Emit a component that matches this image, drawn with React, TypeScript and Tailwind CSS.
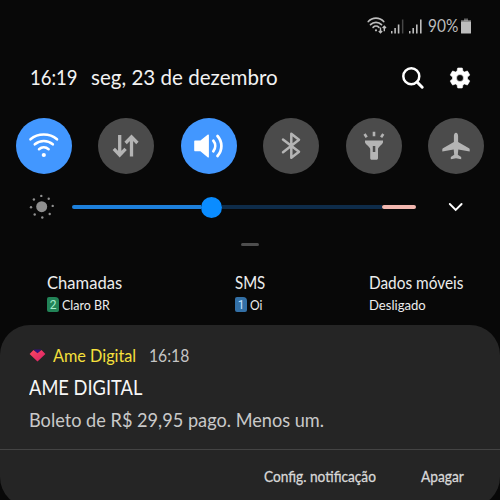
import { useLayoutEffect, useRef, type ReactNode } from "react";

/* Condenses a line of text so that it fills exactly the width of its box. */
function Fit({ className, children }: { className: string; children: string }) {
  const ref = useRef<HTMLSpanElement>(null);
  useLayoutEffect(() => {
    const fit = () => {
      const el = ref.current;
      if (!el || !el.parentElement) return;
      el.style.transform = `scaleX(${el.parentElement.offsetWidth / el.offsetWidth})`;
    };
    fit();
    document.fonts.ready.then(fit);
  }, []);
  return (
    <div className={`shrink-0 whitespace-nowrap ${className}`}>
      <span ref={ref} className="inline-block origin-left">
        {children}
      </span>
    </div>
  );
}

function Toggle({ on = false, children }: { on?: boolean; children: ReactNode }) {
  return (
    <button
      className={`flex size-14 shrink-0 items-center justify-center rounded-full ${
        on ? "bg-[#4297ff] text-white" : "bg-[#4b4b4b] text-[#b4b4b4]"
      }`}
    >
      <svg viewBox="0 0 56 56" className="size-14" fill="none" stroke="currentColor">
        {children}
      </svg>
    </button>
  );
}

function Sim({ color, label }: { color: string; label: string }) {
  return (
    <div className={`flex h-[15px] w-3 items-center justify-center rounded-[2px] rounded-tr-[4px] font-['Roboto',sans-serif] text-[12px] leading-none ${color}`}>
      {label}
    </div>
  );
}

function StatusBar() {
  return (
    <div className="flex h-[51px] shrink-0 items-center pl-[367px] text-[#bdbdbd]">
      <svg viewBox="0 0 56 20" className="h-5 w-14" fill="none" stroke="currentColor">
        <g strokeWidth="1.7" strokeLinecap="round">
          <path d="M1.3 5.5C5.5 .9 12.500 .9 16.700 5.500M3.500 8.700c3-3.200 8-3.200 11 0M6.100 11.400c1.600-1.600 4.200-1.600 5.800 0" />
        </g>
        <circle cx="9" cy="14.300" r="1.100" fill="currentColor" stroke="none" />
        <path d="M13.500 11.500v5M11.800 14.900l1.700 1.800 1.700-1.800M17.300 15.300v-5M15.600 12l1.700-1.800L19 12" strokeWidth="1.400" />
        <g fill="currentColor" stroke="none">
          <path d="M24 15h1.500v2.500H24zM27.300 12h1.600v5.500h-1.600zM30.800 8.500h1.600v9h-1.600z" />
          <path d="M34.900 3.500h1.500v14h-1.500z" opacity=".35" />
          <path d="M42 15h1.500v2.500H42zM45.400 12H47v5.500h-1.600zM49 8.500h1.600v9H49zM53 3.500h1.600v14H53z" />
        </g>
      </svg>
      <Fit className="ml-[5px] w-[30px] text-[18px]">90%</Fit>
      <svg viewBox="0 0 10 16" className="ml-[3px] h-4 w-2.5" fill="currentColor">
        <path d="M3 .5h4V3H3z" opacity=".5" />
        <path d="M0 2h10v2H0z" opacity=".5" />
        <rect y="3.500" width="10" height="12" rx=".6" />
      </svg>
    </div>
  );
}

function Header() {
  return (
    <div className="flex h-[53px] shrink-0 items-center pl-[30px] text-[22px] text-[#f2f2f2]">
      <Fit className="-mt-0.5 w-12">16:19</Fit>
      <Fit className="-mt-0.5 ml-[13px] w-[187px]">seg, 23 de dezembro</Fit>
      <svg viewBox="0 0 24 24" className="ml-[123px] size-6" fill="none" stroke="#fff">
        <circle cx="10.300" cy="10.200" r="8" strokeWidth="2.500" />
        <path d="M16 16l5.200 5.200" strokeWidth="3" strokeLinecap="round" />
      </svg>
      <svg viewBox="0 0 24 24" className="ml-[23px] size-6" fill="#fff" stroke="#fff" strokeWidth=".6">
        <path
          fillRule="evenodd"
          d="M19.430 12.980c.04-.32.070-.64.070-.98s-.03-.66-.07-.98l2.110-1.650c.19-.15.240-.42.120-.64l-2-3.460c-.12-.22-.39-.3-.61-.22l-2.490 1c-.52-.4-1.080-.73-1.690-.98l-.38-2.650C14.460 2.180 14.250 2 14 2h-4c-.25 0-.46.180-.49.420l-.38 2.650c-.61.250-1.170.590-1.690.980l-2.490-1c-.23-.09-.49 0-.61.220l-2 3.460c-.13.220-.07.490.120.640l2.110 1.650c-.04.320-.07.650-.07.980s.030.660.070.980l-2.110 1.650c-.19.150-.24.420-.12.640l2 3.460c.120.220.390.300.610.220l2.490-1c.520.400 1.080.730 1.690.980l.380 2.650c.030.240.240.420.490.420h4c.250 0 .460-.18.490-.42l.380-2.650c.610-.25 1.170-.59 1.690-.98l2.490 1c.230.090.490 0 .610-.22l2-3.460c.120-.22.070-.49-.12-.64zM12 15.500a3.500 3.500 0 1 1 0-7 3.500 3.500 0 0 1 0 7z"
        />
      </svg>
    </div>
  );
}

function Toggles() {
  return (
    <div className="mt-3.5 flex shrink-0 justify-between px-4">
      <Toggle on>
        <path d="M14.500 21.300c7.500-6.400 19-6.400 26.500 0M18.800 26.300c5.200-4.500 12.800-4.500 18 0M23 31.200c2.800-2.400 6.800-2.400 9.600 0" strokeWidth="2.600" strokeLinecap="round" />
        <circle cx="27.800" cy="37" r="2.100" fill="currentColor" stroke="none" />
      </Toggle>
      <Toggle>
        <path d="M21.700 17v20M15.800 30.800l5.900 6.200 5.900-6.200M33.500 38.500V19M27.600 25l5.900-6.200 5.900 6.200" strokeWidth="3.300" />
      </Toggle>
      <Toggle on>
        <path d="M14.200 22.500h5.200l7.500-6c.5-.3 1 0 1 .5v22c0 .5-.5.800-1 .5l-7.500-6.200h-5.200c-.6 0-1-.4-1-1V23.500c0-.6.400-1 1-1z" fill="currentColor" stroke="none" />
        <path d="M32.300 22.700c2.500 3.100 2.500 7.500 0 10.600M36.500 18c5.200 5.800 5.200 14.200 0 20" strokeWidth="2.700" strokeLinecap="round" />
      </Toggle>
      <Toggle>
        <path d="M20 21.500l16 12.300-7.700 6V15.800l7.700 6-16 12.500" strokeWidth="2.500" strokeLinejoin="round" strokeLinecap="round" />
      </Toggle>
      <Toggle>
        <path fillRule="evenodd" d="M19 22.500h18v1.800c0 1.700-5 5-5 6.700v9.200c0 .9-.7 1.500-1.500 1.500h-4.800c-.8 0-1.500-.6-1.500-1.500V31c0-1.700-5.200-5-5.200-6.700zM26.800 28v6h2.500v-6z" fill="currentColor" stroke="none" />
        <path d="M18.500 16l2.200 3.200M28 13.700v4.500M37.300 16l-2.200 3.200" strokeWidth="2.600" />
      </Toggle>
      <Toggle>
        <path d="M28 14.800c1.300 0 2.100 1.500 2.100 3.300v5.800L41 30.200c.5.300.7.700.7 1.200v2L30.300 31.400l-.5 5.300 3.400 2.300v2.200L28 40.200l-5.200 1V39l3.400-2.300-.5-5.300-11.400 2v-2c0-.5.200-.9.700-1.200l10.900-6.300v-5.800c0-1.800.8-3.300 2.100-3.300z" fill="currentColor" stroke="none" />
      </Toggle>
    </div>
  );
}

function Brightness() {
  return (
    <div className="mt-5 flex h-[26px] shrink-0 items-center pl-[29px]">
      <svg viewBox="0 0 26 26" className="size-[26px]" fill="#8f8f8f">
        <circle cx="12.700" cy="12.700" r="5.500" />
        <circle cx="12.300" cy="1.900" r="1.200" />
        <circle cx="19.700" cy="4.800" r="1.200" />
        <circle cx="23.700" cy="11.900" r="1.200" />
        <circle cx="20.700" cy="20" r="1.200" />
        <circle cx="13.300" cy="23.500" r="1.200" />
        <circle cx="5.700" cy="20.500" r="1.200" />
        <circle cx="2" cy="13.200" r="1.200" />
        <circle cx="4.900" cy="5.500" r="1.200" />
      </svg>
      <div className="ml-[17px] flex w-[344px] items-center">
        <div className="h-1 w-[129px] rounded-l-full bg-[#1d80dc]" />
        <div className="size-[21px] rounded-full bg-[#0a8cff]" />
        <div className="h-1 w-[160px] bg-[#0e2c4a]" />
        <div className="h-1 flex-1 rounded-full bg-[#f2b7af]" />
      </div>
      <svg viewBox="0 0 16 10" className="ml-8 h-2.5 w-4" fill="none" stroke="#fff">
        <path d="M1.800 2l5.900 5.900L13.600 2" strokeWidth="1.900" strokeLinecap="round" />
      </svg>
    </div>
  );
}

function SimInfo() {
  return (
    <div className="mt-[26px] flex h-[53px] shrink-0 pl-[47px] text-[17px] leading-[22px] text-[#ededed]">
      <div className="w-[188px]">
        <Fit className="w-[75px]">Chamadas</Fit>
        <div className="flex h-[21px] items-center text-[14px]">
          <Sim color="bg-[#228357] text-[#a6efca]" label="2" />
          <Fit className="ml-[3px] w-12">Claro BR</Fit>
        </div>
      </div>
      <div className="w-[134px]">
        <Fit className="w-[30px]">SMS</Fit>
        <div className="flex h-[21px] items-center text-[14px]">
          <Sim color="bg-[#3370a6] text-[#c0e2ff]" label="1" />
          <Fit className="ml-[3px] w-3">Oi</Fit>
        </div>
      </div>
      <div>
        <Fit className="w-[94px]">Dados móveis</Fit>
        <div className="flex h-[21px] items-center text-[14px]">
          <Fit className="w-[57px]">Desligado</Fit>
        </div>
      </div>
    </div>
  );
}

function Notification() {
  return (
    <div className="h-[182px] shrink-0 rounded-[30px] bg-[#252525]">
      <div className="flex h-[124px] flex-col pl-[29px] pt-[19px]">
        <div className="flex h-[23px] items-center text-[18px]">
          <svg viewBox="0 0 17 13" className="h-[13px] w-[17px]">
            <defs>
              <linearGradient id="heart" x1="0" y1="0" x2="1" y2="1">
                <stop offset="0" stopColor="#ff4a62" />
                <stop offset="1" stopColor="#d81f66" />
              </linearGradient>
            </defs>
            <path d="M4.700 .5h7.600L8.500 5z" fill="#35107a" />
            <path d="M4.500 1l4 3.300L12.500 1l3.900 4-7.900 7.400L.6 5z" fill="url(#heart)" />
          </svg>
          <Fit className="ml-[7px] w-[83px] text-[#f6e03c]">Ame Digital</Fit>
          <Fit className="ml-[13px] w-10 text-[#c4c4c4]">16:18</Fit>
        </div>
        <Fit className="mt-[5px] h-[30px] w-[113px] text-[22px] leading-[30px] text-[#f7f7f7]">AME DIGITAL</Fit>
        <Fit className="mt-0.5 h-[30px] w-[295px] text-[20px] leading-[30px] text-[#c9c9c9]">
          Boleto de R$ 29,95 pago. Menos um.
        </Fit>
      </div>
      <div className="flex h-[53px] items-center border-t border-[#444] pl-[264px] text-[16px] text-[#d8d8d8] [-webkit-text-stroke:0.3px]">
        <Fit className="w-28">Config. notificação</Fit>
        <Fit className="ml-[45px] w-[43px]">Apagar</Fit>
      </div>
    </div>
  );
}

export default function App() {
  return (
    <div className="flex h-[500px] w-[500px] flex-col overflow-hidden bg-[#080808] font-['Lato',sans-serif]">
      <StatusBar />
      <Header />
      <Toggles />
      <Brightness />
      <div className="mt-[23px] h-[3px] w-[18px] shrink-0 self-center rounded-full bg-[#4e4e4e]" />
      <SimInfo />
      <Notification />
    </div>
  );
}
